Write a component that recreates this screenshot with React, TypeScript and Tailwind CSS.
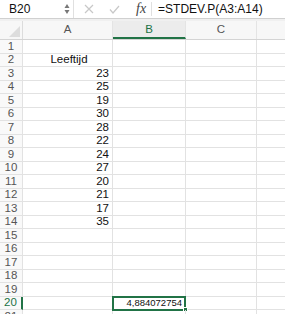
import React from "react";

const values: Record<number, string> = {
  3: "23",
  4: "25",
  5: "19",
  6: "30",
  7: "28",
  8: "22",
  9: "24",
  10: "27",
  11: "20",
  12: "21",
  13: "17",
  14: "35",
};

const rows = Array.from({ length: 21 }, (_, i) => i + 1);

const App: React.FC = () => {
  return (
    <div className="w-[285px] h-[314px] overflow-hidden bg-white font-['Liberation_Sans',Arial,sans-serif] text-[#111]">
      {/* formula bar */}
      <div className="flex h-[19px] items-center border-b border-[#d0d0d0] bg-white">
        <div className="flex w-[73px] items-center justify-between pl-[9px] pr-[3px] text-[12px]">
          <span>B20</span>
          <svg width="6" height="12" viewBox="0 0 6 12" className="text-[#777]">
            <path d="M3 1 L5.5 5 H0.5 Z" fill="currentColor" />
            <path d="M3 11 L5.5 7 H0.5 Z" fill="currentColor" />
          </svg>
        </div>
        <div className="h-full w-px bg-[#e0e0e0]" />
        <div className="flex items-center gap-[15px] pl-[10px]">
          <svg width="10" height="10" viewBox="0 0 10 10">
            <path d="M1 1 L9 9 M9 1 L1 9" stroke="#c8c8c8" strokeWidth="1.2" />
          </svg>
          <svg width="11" height="9" viewBox="0 0 11 9">
            <path d="M1 4.5 L4 8 L10 1" stroke="#c8c8c8" strokeWidth="1.2" fill="none" />
          </svg>
        </div>
        <span className="ml-[16px] font-['Liberation_Serif',serif] italic text-[14px] text-[#444] leading-none">
          fx
        </span>
        <div className="ml-[5px] h-[14px] w-px bg-[#e0e0e0]" />
        <span className="ml-[6px] text-[12px]">=STDEV.P(A3:A14)</span>
      </div>
      <div className="h-[2px] bg-[#f0f0f0]" />

      {/* column headers */}
      <div className="flex h-[19px] border-b border-[#d4d4d4] bg-[#f7f7f7] text-[11.5px] text-[#555]">
        <div className="relative w-[23px] border-r border-[#dcdcdc]">
          <svg className="absolute right-[2px] bottom-[2px]" width="11" height="11" viewBox="0 0 11 11">
            <path d="M11 0 V11 H0 Z" fill="#dddddd" />
          </svg>
        </div>
        <div className="flex w-[90px] items-center justify-center border-r border-[#e4e4e4]">A</div>
        <div className="flex w-[73px] items-center justify-center border-b-2 border-r border-b-[#217346] border-r-[#e4e4e4] bg-[#ececec] pt-[2px] font-medium text-[#217346]">
          B
        </div>
        <div className="flex w-[71px] items-center justify-center border-r border-[#e4e4e4]">C</div>
        <div className="flex-1" />
      </div>

      {/* rows */}
      {rows.map((r) => (
        <div key={r} className="flex h-[13.5px] text-[11.5px] leading-none">
          <div
            className={`flex w-[23px] items-center justify-center border-b border-r bg-[#f9f9f9] ${
              r === 20
                ? "border-r-2 border-r-[#217346] border-b-[#e2e2e2] text-[#217346]"
                : "border-[#e2e2e2] text-[#555]"
            }`}
          >
            {r}
          </div>
          <div
            className={`flex w-[90px] items-center border-b border-r border-[#e2e2e2] ${
              r === 2 ? "justify-center pl-[3px]" : "justify-end pr-[3px]"
            }`}
          >
            {r === 2 ? "Leeftijd" : values[r] ?? ""}
          </div>
          <div className="relative flex w-[73px] items-center justify-end border-b border-r border-[#e2e2e2] pr-[3px]">
            {r === 20 && (
              <>
                <div className="absolute -left-px -top-px h-[15px] w-[74px] border-2 border-[#217346]" />
                <span className="text-[9.5px]">4,884072754</span>
                <div className="absolute -right-[3px] -bottom-[3px] h-[5px] w-[5px] border border-white bg-[#217346]" />
              </>
            )}
          </div>
          <div className="w-[71px] border-b border-r border-[#e2e2e2]" />
          <div className="flex-1 border-b border-[#e2e2e2]" />
        </div>
      ))}
    </div>
  );
};

export default App;
